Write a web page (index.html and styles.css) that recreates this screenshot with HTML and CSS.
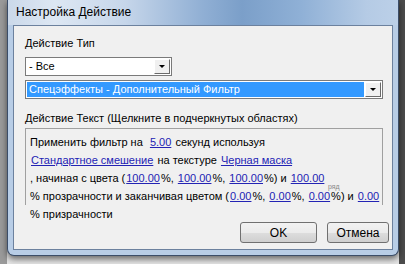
FILE: index.html
```html
<!DOCTYPE html>
<html>
<head>
    <title>Настройка Действие</title>
    <link rel="stylesheet" href="styles.css">
</head>
<body>
    <div class="desk">
        <div class="window">
            <div class="titlebar">Настройка Действие</div>
            <div class="client">
                <div class="label first">Действие Тип</div>
                <div class="combo combo-small">
                    <span class="combo-text">- Все</span>
                    <span class="combo-btn"><span class="arrow"></span></span>
                </div>
                <div class="combo combo-wide">
                    <span class="combo-text selected">Спецэффекты - Дополнительный Фильтр</span>
                    <span class="combo-btn"><span class="arrow"></span></span>
                </div>
                <div class="label second">Действие Текст (Щелкните в подчеркнутых областях)</div>
                <div class="rich">
                    <div class="line">Применить фильтр на &nbsp;<a href="#">5.00</a> секунд используя</div>
                    <div class="line"><a href="#">Стандартное смешение</a> на текстуре <a href="#">Черная маска</a></div>
                    <div class="line">, начиная с цвета (<a href="#">100.00</a>%, <a href="#">100.00</a>%, <a href="#">100.00</a>%) и <a href="#">100.00</a></div>
                    <div class="line">% прозрачности и заканчивая цветом (<a href="#">0.00</a>%, <a href="#">0.00</a>%, <a href="#">0.00</a>%) и <a href="#">0.00</a></div>
                    <div class="line">% призрачности</div>
                    <span class="ghost">ряд</span>
                </div>
                <div class="buttons">
                    <button class="btn btn-ok">OK</button>
                    <button class="btn btn-cancel">Отмена</button>
                </div>
            </div>
        </div>
    </div>
</body>
</html>
```

FILE: styles.css
```css
body {
    margin: 0;
    width: 405px;
    height: 264px;
    overflow: hidden;
    background-color: #e4e4e4;
    font-family: "Liberation Sans", Arial, sans-serif;
    font-size: 11px;
    color: #000;
}

.desk {
    display: flex;
    height: 264px;
    background: linear-gradient(to right, #9a9a9a 0 7px, #e4e4e4 7px 399px, #4c4c4c 399px);
}

.window {
    display: flex;
    flex-direction: column;
    box-sizing: border-box;
    width: 392px;
    height: 256px;
    margin-left: 7px;
    padding: 0 5px 5px 5px;
    border: 1px solid #3b4d68;
    border-top: none;
    border-radius: 0 0 7px 7px;
    background-color: #b8cde6;
    box-shadow: 0 3px 6px rgba(0, 0, 0, 0.55);
}

.titlebar {
    height: 25px;
    margin: 0 -5px;
    padding-left: 8px;
    font-size: 12px;
    line-height: 25px;
    background: linear-gradient(to right, #cbd9ea 0%, #dde7f3 12%, #c6d6ea 30%, #90afd4 50%, #7b9fc9 60%, #8fb0d6 75%, #b5cbe5 92%, #bcd0e8 100%);
}

.client {
    flex: 1;
    padding-left: 11px;
    background-color: #f0f0f0;
    border: 1px solid #6c819e;
}

.label {
    line-height: 16px;
}

.label.first {
    margin-top: 9px;
}

.label.second {
    margin-top: 11px;
}

.combo {
    display: flex;
    box-sizing: border-box;
    height: 19px;
    padding: 1px;
    background-color: #fff;
    border: 1px solid #7a7a7a;
}

.combo-small {
    width: 147px;
    margin-top: 6px;
}

.combo-wide {
    width: 358px;
    margin-top: 4px;
}

.combo-text {
    flex: 1;
    padding-left: 2px;
    line-height: 15px;
    white-space: nowrap;
}

.combo-text.selected {
    background-color: #3399ff;
    color: #fff;
}

.combo-btn {
    display: flex;
    justify-content: center;
    align-items: center;
    box-sizing: border-box;
    width: 16px;
    height: 15px;
    margin-left: 1px;
    background-color: #f0f0f0;
    border: 1px solid;
    border-color: #fff #6a6a6a #6a6a6a #fff;
}

.arrow {
    width: 0;
    height: 0;
    border-left: 3px solid transparent;
    border-right: 3px solid transparent;
    border-top: 3px solid #000;
}

.rich {
    position: relative;
    box-sizing: border-box;
    width: 358px;
    height: 77px;
    margin-top: 2px;
    padding: 4px 0 0 4px;
    border: 1px solid #a0a0a0;
    border-bottom: none;
    line-height: 18px;
}

.line {
    white-space: nowrap;
}

.rich a {
    margin: 0 1px;
    color: #2323b4;
    text-decoration: underline;
}

.ghost {
    position: absolute;
    left: 302px;
    top: 54px;
    font-size: 7px;
    line-height: 7px;
    color: #8a8a8a;
}

.buttons {
    display: flex;
    justify-content: flex-end;
    gap: 10px;
    margin-top: 17px;
    padding-right: 3px;
}

.btn {
    height: 21px;
    padding: 0;
    font-family: "Liberation Sans", Arial, sans-serif;
    font-size: 12px;
    color: #000;
    border: 1px solid #707070;
    border-radius: 3px;
    background: linear-gradient(to bottom, #f2f2f2 0%, #ebebeb 50%, #dddddd 51%, #cfcfcf 100%);
}

.btn-ok {
    width: 77px;
}

.btn-cancel {
    width: 62px;
}
```
